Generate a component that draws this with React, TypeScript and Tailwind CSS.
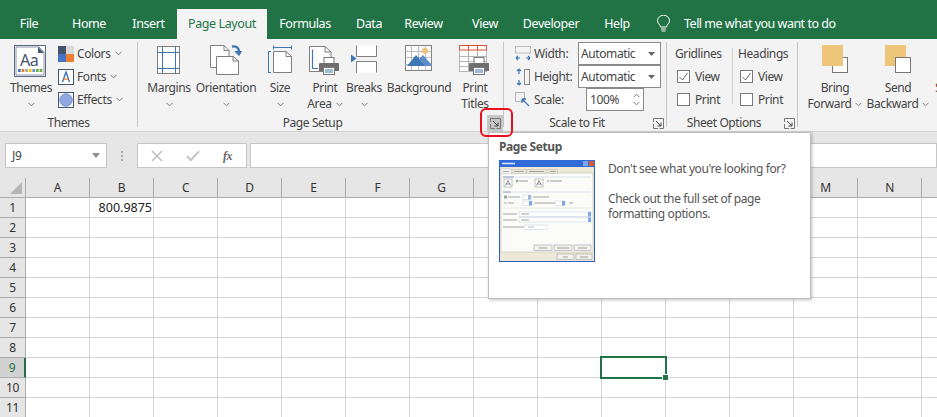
import React from "react";

const Chev = ({ className = "" }: { className?: string }) => (
  <svg width="7" height="5" viewBox="0 0 7 5" className={className}>
    <path d="M0.5 0.8 L3.5 3.8 L6.5 0.8" fill="none" stroke="#777" strokeWidth="1" />
  </svg>
);

const Launcher = ({ active = false }: { active?: boolean }) => (
  <div className={`w-[16px] h-[16px] flex items-center justify-center ${active ? "bg-[#c6c6c6]" : ""}`}>
    <svg width="11" height="11" viewBox="0 0 11 11">
      <path d="M0.5 4V0.5H10.5V10.5H6.5M0.5 6V10.5H5" fill="none" stroke="#777" strokeWidth="1" />
      <path d="M3 3L8 8M8 4.5V8H4.5" fill="none" stroke="#444" strokeWidth="1" />
    </svg>
  </div>
);

const PAGE = "#7f7f7f";
const BLUE = "#3f76b5";

const Printer = ({ x, y }: { x: number; y: number }) => (
  <g transform={`translate(${x} ${y})`}>
    <rect x="5" y="0.5" width="10" height="7" fill="#fff" stroke="#777" />
    <path d="M1 6H19a1 1 0 0 1 1 1V14H0V7a1 1 0 0 1 1-1Z" fill="#6f6f6f" />
    <rect x="4.5" y="10.5" width="11" height="7" fill="#fff" stroke="#777" />
    <path d="M6 13H14M6 15H14" stroke="#3f76b5" strokeWidth="1" />
  </g>
);

const Icons: Record<string, React.ReactNode> = {
  themes: (
    <svg width="34" height="34" viewBox="0 0 34 34">
      <rect x="0.5" y="0.5" width="31" height="31" fill="#fff" stroke="#5b6b85" />
      <path d="M2 2H25L30 7V30H2Z" fill="#fff" stroke="#8a93a5" />
      <path d="M24 2L30 8H24Z" fill="#44546a" />
      <text x="6" y="21" fontSize="16" fill="#44546a" fontFamily="Noto Sans">Aa</text>
      {["#4472c4", "#ed7d31", "#a5a5a5", "#ffc000", "#5b9bd5", "#70ad47", "#70ad47"].map((c, i) => (
        <rect key={i} x={4 + i * 3.6} y="24" width="2.7" height="3" fill={c} />
      ))}
    </svg>
  ),
  margins: (
    <svg width="24" height="30" viewBox="0 0 24 30">
      <rect x="0.5" y="1.5" width="22" height="27" fill="#fff" stroke={PAGE} />
      <path d="M5.5 1.5V28.5M18.5 1.5V28.5M0.5 7.5H22.5M0.5 23.5H22.5" stroke={BLUE} fill="none" />
    </svg>
  ),
  orientation: (
    <svg width="32" height="32" viewBox="0 0 32 32">
      <path d="M0.5 0.5H14L19 5.5V22.5H0.5Z" fill="#fff" stroke={PAGE} />
      <path d="M14 0.5V5.5H19" fill="none" stroke={PAGE} />
      <path d="M6.5 11.5H23L28.5 16V29.5H6.5Z" fill="#fff" stroke={PAGE} />
      <path d="M23 11.5V16H28.5" fill="none" stroke={PAGE} />
      <path d="M22 1.5C27 1 29 3 29 7" fill="none" stroke={BLUE} strokeWidth="2.4" />
      <path d="M25 6.5H31.5L29 10.5Z" fill={BLUE} stroke={BLUE} />
    </svg>
  ),
  size: (
    <svg width="25" height="30" viewBox="0 0 25 30">
      <path d="M5.5 2.5H23.5M5.5 0.5V4.5M23.5 0.5V4.5M0.5 6.5V27.5M-1 6.5H3M-1 27.5H3" stroke={BLUE} fill="none" />
      <path d="M5.5 6.5H18L23.5 11.5V27.5H5.5Z" fill="#fff" stroke={PAGE} />
      <path d="M18 6.5V11.5H23.5" fill="none" stroke={PAGE} />
    </svg>
  ),
  printarea: (
    <svg width="32" height="32" viewBox="0 0 32 32">
      <path d="M0.5 1.5H16L22 7V26.5H0.5Z" fill="#fff" stroke={PAGE} />
      <path d="M16 1.5V7H22" fill="none" stroke={PAGE} />
      <path d="M3.5 4.5V23.5H9" fill="none" stroke={BLUE} strokeWidth="1.2" />
      <Printer x={10} y={12} />
    </svg>
  ),
  breaks: (
    <svg width="26" height="30" viewBox="0 0 26 30">
      <path d="M5.5 0.5V11.5H25.5V0.5M5.5 27.5V16.5H25.5V27.5M5.5 16.5V27.5" fill="#fff" stroke={PAGE} />
      <path d="M0 9.5L5.5 13.5L0 17.5Z" fill={BLUE} />
    </svg>
  ),
  background: (
    <svg width="28" height="27" viewBox="0 0 28 27">
      <rect x="0.5" y="0.5" width="26" height="25" fill="#fff" stroke={PAGE} />
      <path d="M6.5 0.5V25.5M13.5 0.5V25.5M20.5 0.5V25.5M0.5 6.5H26.5M0.5 12.5H26.5M0.5 19.5H26.5" stroke="#bbb" />
      <circle cx="20" cy="6" r="3" fill="#eec27a" />
      <path d="M2 21L11 10L21 21Z" fill="#3f76b5" />
      <path d="M14 14L18 10L26 19V21H20Z" fill="#5c8fc9" />
    </svg>
  ),
  titles: (
    <svg width="32" height="32" viewBox="0 0 32 32">
      <rect x="0.5" y="0.5" width="27" height="26" fill="#fff" stroke="#b5b5b5" />
      <path d="M9.5 5V26.5M18.5 5V26.5M0.5 11.5H27.5M0.5 16.5H27.5M0.5 21.5H27.5" stroke="#b5b5b5" />
      <path d="M0.5 0.5H27.5M0.5 5H27.5M9.5 0.5V5M18.5 0.5V5M0.5 0.5V5M27.5 0.5V5" stroke="#d9512c" fill="none" />
      <Printer x={10} y={12} />
    </svg>
  ),
  forward: (
    <svg width="27" height="29" viewBox="0 0 27 29">
      <rect x="10.5" y="12.5" width="15" height="15" fill="#fff" stroke="#777" />
      <rect x="0" y="0" width="21" height="21" fill="#eec67a" />
    </svg>
  ),
  backward: (
    <svg width="27" height="29" viewBox="0 0 27 29">
      <rect x="0" y="0" width="21" height="21" fill="#eec67a" />
      <rect x="10.5" y="12.5" width="15" height="15" fill="#fff" stroke="#777" />
    </svg>
  ),
  selection: (
    <svg width="27" height="29" viewBox="0 0 27 29">
      <rect x="0" y="0" width="21" height="21" fill="#eec67a" />
    </svg>
  ),
};

const Big = ({ w, icon, l1, l2, chev }: { w: string; icon: string; l1: string; l2?: string; chev?: "under" | "inline" }) => (
  <div className={`${w} shrink-0 flex flex-col items-center`}>
    <div className="h-[41px] flex items-start justify-center pt-[6px]">{Icons[icon]}</div>
    <div className="h-[16px] leading-[16px] whitespace-nowrap">{l1}</div>
    <div className="h-[16px] leading-[16px] whitespace-nowrap flex items-center justify-center gap-[4px]">
      {l2}
      {chev && <Chev />}
    </div>
  </div>
);

const GroupLabel = ({ text, launcher, active }: { text: string; launcher?: boolean; active?: boolean }) => (
  <div className="h-[18px] shrink-0 mt-[1px] flex items-center">
    <div className="flex-1 text-center leading-[16px]">{text}</div>
    {launcher && <Launcher active={active} />}
  </div>
);

const Sep = () => <div className="w-px shrink-0 h-[85px] mt-[3px] bg-[#c6c6c6]" />;

const SmallItem = ({ icon, text }: { icon: React.ReactNode; text: string }) => (
  <div className="h-[23px] flex items-center">
    <div className="w-[16px] h-[16px] mr-[3px]">{icon}</div>
    <span>{text}</span>
    <Chev className="ml-[4px]" />
  </div>
);

const Check = ({ on, text }: { on?: boolean; text: string }) => (
  <div className="h-[23px] flex items-center pl-[3px]">
    <div className="w-[13px] h-[13px] border border-[#7a7a7a] bg-white flex items-center justify-center mr-[5px]">
      {on && (
        <svg width="11" height="11" viewBox="0 0 11 11">
          <path d="M1.5 6L4.5 9L9.5 2" fill="none" stroke="#666" />
        </svg>
      )}
    </div>
    <span>{text}</span>
  </div>
);

const Combo = () => (
  <div className="h-[23px] w-[83px] ml-[8px] border border-[#8a8a8a] bg-white flex items-center pl-[2px] pr-[5px] justify-between">
    <span>Automatic</span>
    <svg width="7" height="4" viewBox="0 0 7 4"><path d="M0 0H7L3.5 4Z" fill="#666" /></svg>
  </div>
);

const tabs: [string, string][] = [
  ["File", "w-[58px]"],
  ["Home", "w-[62px]"],
  ["Insert", "w-[57px]"],
  ["Page Layout", "w-[90px]"],
  ["Formulas", "w-[76px]"],
  ["Data", "w-[52px]"],
  ["Review", "w-[57px]"],
  ["View", "w-[66px]"],
  ["Developer", "w-[66px]"],
  ["Help", "w-[66px]"],
];

const cols = ["A", "B", "C", "D", "E", "F", "G", "H", "I", "J", "K", "L", "M", "N", "O"];
const rows = [1, 2, 3, 4, 5, 6, 7, 8, 9, 10, 11];

const Thumb = () => {
  const field = (x: number, y: number, w: number, key: string) => (
    <rect key={key} x={x} y={y} width={w} height="4.5" fill="#fff" stroke="#c3cde0" strokeWidth="0.5" />
  );
  const btn = (x: number, y: number, w: number, key: string) => (
    <rect key={key} x={x} y={y} width={w} height="5.5" fill="#f3f2ea" stroke="#8a8fa0" strokeWidth="0.5" />
  );
  return (
    <svg width="96" height="102" viewBox="0 0 96 102" className="shrink-0">
      <rect width="96" height="102" fill="#2a5fc4" />
      <rect x="1" y="7" width="94" height="94" fill="#ece9d8" />
      <rect x="0" y="0" width="96" height="7" fill="#2f6ad6" />
      <path d="M3 3.5H16" stroke="#dfe8fb" strokeWidth="1.5" />
      <rect x="84" y="1" width="5" height="5" fill="#7fa6e8" />
      <rect x="90" y="1" width="5" height="5" fill="#d9583b" />
      <rect x="2" y="13" width="92" height="79" fill="#fbfbf7" stroke="#b9b6a6" strokeWidth="0.5" />
      <rect x="2" y="9" width="10.5" height="4.5" fill="#fbfbf7" stroke="#a9a9a9" strokeWidth="0.4" />
      <rect x="13" y="9.5" width="14" height="4" fill="#ece9d8" stroke="#a9a9a9" strokeWidth="0.4" />
      <rect x="28" y="9.5" width="19" height="4" fill="#ece9d8" stroke="#a9a9a9" strokeWidth="0.4" />
      <rect x="49" y="9.5" width="9.5" height="4" fill="#ece9d8" stroke="#a9a9a9" strokeWidth="0.4" />
      <path d="M4 11.5H10M15 11.5H25M30 11.5H45M51 11.5H57" stroke="#999" strokeWidth="0.9" />
      <path d="M4 17H15" stroke="#7c93c4" strokeWidth="1" />
      <path d="M16 17H92" stroke="#c7d4ea" strokeWidth="0.6" />
      <rect x="5" y="19" width="8" height="8" fill="#fff" stroke="#888" strokeWidth="0.5" />
      <path d="M6.5 25.5L9 20.5L11.5 25.5M7.5 24H10.5" fill="none" stroke="#444" strokeWidth="0.6" />
      <rect x="36" y="19" width="8" height="8" fill="#fff" stroke="#888" strokeWidth="0.5" />
      <path d="M37.5 25.5L40 20.5L42.5 25.5M38.5 24H41.5" fill="none" stroke="#444" strokeWidth="0.6" />
      <circle cx="18" cy="21" r="1.3" fill="#7fb08a" />
      <circle cx="49" cy="21" r="1.3" fill="#c9c9c9" />
      <path d="M20 21H29M51 21H63" stroke="#9a9a9a" strokeWidth="1" />
      <path d="M4 32H12" stroke="#7c93c4" strokeWidth="1" />
      <path d="M13 32H92" stroke="#c7d4ea" strokeWidth="0.6" />
      <rect x="5" y="35.5" width="3" height="3" fill="#9aa89a" />
      <circle cx="6.5" cy="43" r="1.4" fill="#cfcfcf" />
      <path d="M9 37H21M34 37H50M9 43H15M35 43H56M70 43H74" stroke="#a3a3a3" strokeWidth="1" />
      {field(24, 35, 8, "f1")}
      {field(24, 41, 9, "f2")}
      {field(56, 41, 10, "f3")}
      <rect x="29" y="35" width="3" height="4.5" fill="#9db6e0" />
      <rect x="30" y="41" width="3" height="4.5" fill="#7fa6e8" />
      <rect x="63" y="41" width="3" height="4.5" fill="#7fa6e8" />
      <path d="M4 48H92" stroke="#ddd" strokeWidth="0.6" />
      {field(20, 52, 72, "f4")}
      {field(20, 57.5, 72, "f5")}
      <rect x="89" y="52" width="3" height="4.5" fill="#7fa6e8" />
      <rect x="89" y="57.5" width="3" height="4.5" fill="#7fa6e8" />
      <path d="M4 54H18M4 60H18M4 67H25M22 54H30M22 60H30" stroke="#a3a3a3" strokeWidth="1" />
      {field(26, 65, 22, "f6")}
      <path d="M29 67H35" stroke="#bbb" strokeWidth="1" />
      {btn(35, 85, 18, "b1")}
      {btn(55, 85, 18, "b2")}
      {btn(75, 85, 17, "b3")}
      <path d="M40 88H48M58 88H70M79 88H88" stroke="#888" strokeWidth="0.8" />
      {btn(58, 94, 17, "b4")}
      {btn(77, 94, 16, "b5")}
      <path d="M64 97H69M81 97H89" stroke="#888" strokeWidth="0.8" />
    </svg>
  );
};

export default function App() {
  return (
    <div className="relative w-[937px] h-[417px] overflow-hidden bg-white text-[12px] text-[#444] [font-family:'Noto_Sans',sans-serif] tracking-[-0.4px]">
      {/* Tabs */}
      <div className="h-[39px] bg-[#217346] flex items-end text-white text-[12.5px]">
        {tabs.map(([t, w]) =>
          t === "Page Layout" ? (
            <div key={t} className={`${w} h-[30px] bg-[#f3f3f3] text-[#217346] flex items-center justify-center pt-[1px]`}>{t}</div>
          ) : (
            <div key={t} className={`${w} h-[30px] flex items-center justify-center pt-[1px]`}>{t}</div>
          )
        )}
        <div className="h-[30px] flex items-center pl-[6px] gap-[13px]">
          <svg width="15" height="18" viewBox="0 0 15 18">
            <path d="M4.5 12C4.5 9.5 1.5 9 1.5 5.7A6 5.5 0 0 1 13.5 5.7C13.5 9 10.5 9.5 10.5 12ZM5 14H10M5.5 16H9.5" fill="none" stroke="#fff" strokeWidth="1" />
          </svg>
          <span className="tracking-[-0.5px]">Tell me what you want to do</span>
        </div>
      </div>

      {/* Ribbon */}
      <div className="h-[93px] bg-[#f3f3f3] border-b border-[#d2d2d2] flex">
        {/* Themes */}
        <div className="w-[137px] shrink-0 flex flex-col">
          <div className="h-[74px] shrink-0 flex">
            <div className="w-[58px] shrink-0 flex flex-col items-center pl-[4px]">
              <div className="h-[41px] pt-[6px]">{Icons.themes}</div>
              <div className="h-[16px] leading-[16px]">Themes</div>
              <div className="h-[16px] flex items-center"><Chev /></div>
            </div>
            <div className="flex flex-col pt-[3px]">
              <SmallItem
                text="Colors"
                icon={
                  <svg width="16" height="16" viewBox="0 0 16 16">
                    <rect width="8" height="8" fill="#44546a" />
                    <rect x="8" width="8" height="8" fill="#d9d9d9" />
                    <rect y="8" width="8" height="8" fill="#4472c4" />
                    <rect x="8" y="8" width="8" height="8" fill="#ed7d31" />
                  </svg>
                }
              />
              <SmallItem
                text="Fonts"
                icon={
                  <svg width="16" height="16" viewBox="0 0 16 16">
                    <rect x="0.5" y="0.5" width="15" height="15" fill="#fff" stroke="#44546a" />
                    <path d="M4.5 13L8 3L11.5 13" fill="none" stroke="#2f6fb5" strokeWidth="1.3" />
                    <path d="M5.5 10H10.5" stroke="#ed7d31" strokeWidth="1.3" />
                  </svg>
                }
              />
              <SmallItem
                text="Effects"
                icon={
                  <svg width="16" height="16" viewBox="0 0 16 16">
                    <rect x="0.5" y="0.5" width="15" height="15" fill="#fff" stroke="#44546a" />
                    <circle cx="8" cy="8" r="6.3" fill="#8fa9df" stroke="#5f7fc4" strokeWidth="0.7" />
                  </svg>
                }
              />
            </div>
          </div>
          <GroupLabel text="Themes" />
        </div>
        <Sep />
        {/* Page Setup */}
        <div className="w-[365px] shrink-0 flex flex-col">
          <div className="h-[74px] shrink-0 flex pl-[5px]">
            <Big w="w-[52px]" icon="margins" l1="Margins" chev="under" />
            <Big w="w-[62px]" icon="orientation" l1="Orientation" chev="under" />
            <Big w="w-[46px]" icon="size" l1="Size" chev="under" />
            <Big w="w-[44px]" icon="printarea" l1="Print" l2="Area" chev="inline" />
            <Big w="w-[34px]" icon="breaks" l1="Breaks" chev="under" />
            <Big w="w-[76px]" icon="background" l1="Background" />
            <Big w="w-[36px]" icon="titles" l1="Print" l2="Titles" />
          </div>
          <GroupLabel text="Page Setup" launcher active />
        </div>
        <Sep />
        {/* Scale to Fit */}
        <div className="w-[162px] shrink-0 flex flex-col">
          <div className="h-[74px] shrink-0 flex flex-col pl-[11px] pt-[3px]">
            <div className="h-[23px] flex items-center">
              <svg width="16" height="16" viewBox="0 0 16 16" className="mr-[3px]">
                <path d="M0.5 0.5H15.5M0.5 0.5V7M15.5 0.5V7M0.5 7H15.5" stroke="#888" fill="none" strokeDasharray="1 1" />
                <path d="M1 12H5M1 12L3 10M1 12L3 14M15 12H11M15 12L13 10M15 12L13 14" stroke={BLUE} fill="none" strokeWidth="1.2" />
              </svg>
              <span className="w-[36px]">Width:</span>
              <Combo />
            </div>
            <div className="h-[23px] flex items-center">
              <svg width="16" height="18" viewBox="0 0 16 18" className="mr-[3px]">
                <rect x="9.5" y="1.5" width="5" height="15" fill="none" stroke="#888" />
                <path d="M4 1V6M4 1L2 3M4 1L6 3M4 17V12M4 17L2 15M4 17L6 15" stroke={BLUE} fill="none" strokeWidth="1.2" />
              </svg>
              <span className="w-[36px]">Height:</span>
              <Combo />
            </div>
            <div className="h-[23px] flex items-center">
              <svg width="16" height="16" viewBox="0 0 16 16" className="mr-[3px]">
                <rect x="0.5" y="0.5" width="9" height="9" fill="none" stroke="#777" strokeDasharray="1 1" />
                <path d="M7 7L14 14M7 7H11M7 7V11" stroke={BLUE} fill="none" strokeWidth="1.3" />
              </svg>
              <span className="w-[52px]">Scale:</span>
              <div className="h-[23px] w-[58px] border border-[#8a8a8a] bg-white flex items-center justify-between pl-[3px] pr-[3px]">
                <span>100%</span>
                <div className="flex flex-col gap-[3px]">
                  <Chev className="rotate-180" />
                  <Chev />
                </div>
              </div>
            </div>
          </div>
          <GroupLabel text="Scale to Fit" launcher />
        </div>
        <Sep />
        {/* Sheet Options */}
        <div className="w-[130px] shrink-0 flex flex-col">
          <div className="h-[74px] shrink-0 flex pl-[7px] pt-[3px]">
            <div className="w-[58px] flex flex-col">
              <div className="h-[23px] flex items-center pl-[1px]">Gridlines</div>
              <Check on text="View" />
              <Check text="Print" />
            </div>
            <div className="w-px h-[56px] mt-[6px] bg-[#d0d0d0] mr-[4px]" />
            <div className="w-[58px] flex flex-col">
              <div className="h-[23px] flex items-center pl-[1px]">Headings</div>
              <Check on text="View" />
              <Check text="Print" />
            </div>
          </div>
          <GroupLabel text="Sheet Options" launcher />
        </div>
        <Sep />
        {/* Arrange */}
        <div className="flex-1 overflow-hidden flex">
          <div className="flex pl-[6px]">
            <Big w="w-[62px]" icon="forward" l1="Bring" l2="Forward" chev="inline" />
            <Big w="w-[64px]" icon="backward" l1="Send" l2="Backward" chev="inline" />
            <Big w="w-[58px]" icon="selection" l1="Selection" l2="Pane" />
          </div>
        </div>
      </div>

      {/* Formula bar */}
      <div className="h-[46px] bg-[#e6e6e6] flex items-start pt-[11px] pl-[5px] text-[#444]">
        <div className="w-[102px] h-[25px] bg-white border border-[#c6c6c6] flex items-center justify-between pl-[6px] pr-[6px]">
          <span>J9</span>
          <svg width="8" height="5" viewBox="0 0 8 5"><path d="M0 0H8L4 5Z" fill="#8f8f8f" /></svg>
        </div>
        <div className="w-[30px] h-[25px] flex flex-col items-center justify-center gap-[2px]">
          <span className="w-[2px] h-[2px] bg-[#aaa]" />
          <span className="w-[2px] h-[2px] bg-[#aaa]" />
          <span className="w-[2px] h-[2px] bg-[#aaa]" />
        </div>
        <div className="w-[110px] h-[25px] bg-white border border-[#c6c6c6] flex items-center pl-[13px]">
          <svg width="12" height="12" viewBox="0 0 12 12"><path d="M1 1L11 11M11 1L1 11" stroke="#c0c0c0" strokeWidth="1.6" /></svg>
          <svg width="14" height="12" viewBox="0 0 15 12" className="ml-[23px]"><path d="M1 6L5 10.5L14 1" fill="none" stroke="#c0c0c0" strokeWidth="2" /></svg>
          <span className="ml-[23px] italic font-bold text-[12px] text-[#666] [font-family:'Liberation_Serif',serif]">fx</span>
        </div>
        <div className="flex-1 h-[25px] ml-[3px] bg-white border border-[#c6c6c6]" />
      </div>

      {/* Sheet */}
      <div className="flex h-[20px]">
        <div className="w-[26px] shrink-0 bg-[#e6e6e6] border-b border-r border-[#ababab] flex items-end justify-end pr-[3px] pb-[3px]">
          <svg width="12" height="12" viewBox="0 0 12 12"><path d="M12 0V12H0Z" fill="#b5b5b5" /></svg>
        </div>
        {cols.map((c, i) => (
          <div key={c} className={`shrink-0 bg-[#e6e6e6] border-b border-[#ababab] flex items-center justify-center text-[#333] ${i > 0 ? "w-[64px] border-l" : "w-[63px]"}`}>
            {c}
          </div>
        ))}
      </div>
      {rows.map((r) => (
        <div key={r} className="flex h-[20px]">
          {r === 9 ? (
            <div className="w-[26px] shrink-0 bg-[#d2d2d2] border-b border-[#ababab] border-r-2 border-r-[#217346] flex items-center justify-center pt-[1px] text-[#217346]">{r}</div>
          ) : (
            <div className="w-[26px] shrink-0 bg-[#e6e6e6] border-b border-r border-[#ababab] flex items-center justify-center pt-[1px] text-[#333]">{r}</div>
          )}
          {cols.map((c, i) => (
            <div key={c} className={`shrink-0 flex items-center justify-end pr-[1px] pt-[1px] text-[12.5px] tracking-normal text-[#222] border-b border-[#d4d4d4] ${i > 0 ? "w-[64px] border-l" : "w-[63px]"}`}>
              {r === 1 && c === "B" ? "800.9875" : ""}
            </div>
          ))}
        </div>
      ))}

      {/* Selected cell */}
      <div className="absolute left-[600px] top-[356px] w-[67px] h-[23px] border-2 border-[#217346]" />
      <div className="absolute left-[663px] top-[375px] w-[5px] h-[5px] bg-[#217346] outline outline-1 outline-white" />

      {/* Tooltip */}
      <div className="absolute left-[488px] top-[132px] w-[323px] h-[167px] bg-white border border-[#bebebe] shadow-[1px_1px_3px_rgba(0,0,0,0.25)] pl-[10px] pt-[6px]">
        <div className="font-bold text-[#555] leading-[16px]">Page Setup</div>
        <div className="flex mt-[5px]">
          <Thumb />
          <div className="ml-[13px] text-[#555] leading-[15px] pt-[1px]">
            <div>Don't see what you're looking for?</div>
            <div className="mt-[15px]">Check out the full set of page</div>
            <div>formatting options.</div>
          </div>
        </div>
      </div>

      {/* Red highlight */}
      <div className="absolute left-[480px] top-[108px] w-[33px] h-[29px] rounded-[6px] border-2 border-[#e8101c]" />
    </div>
  );
}
